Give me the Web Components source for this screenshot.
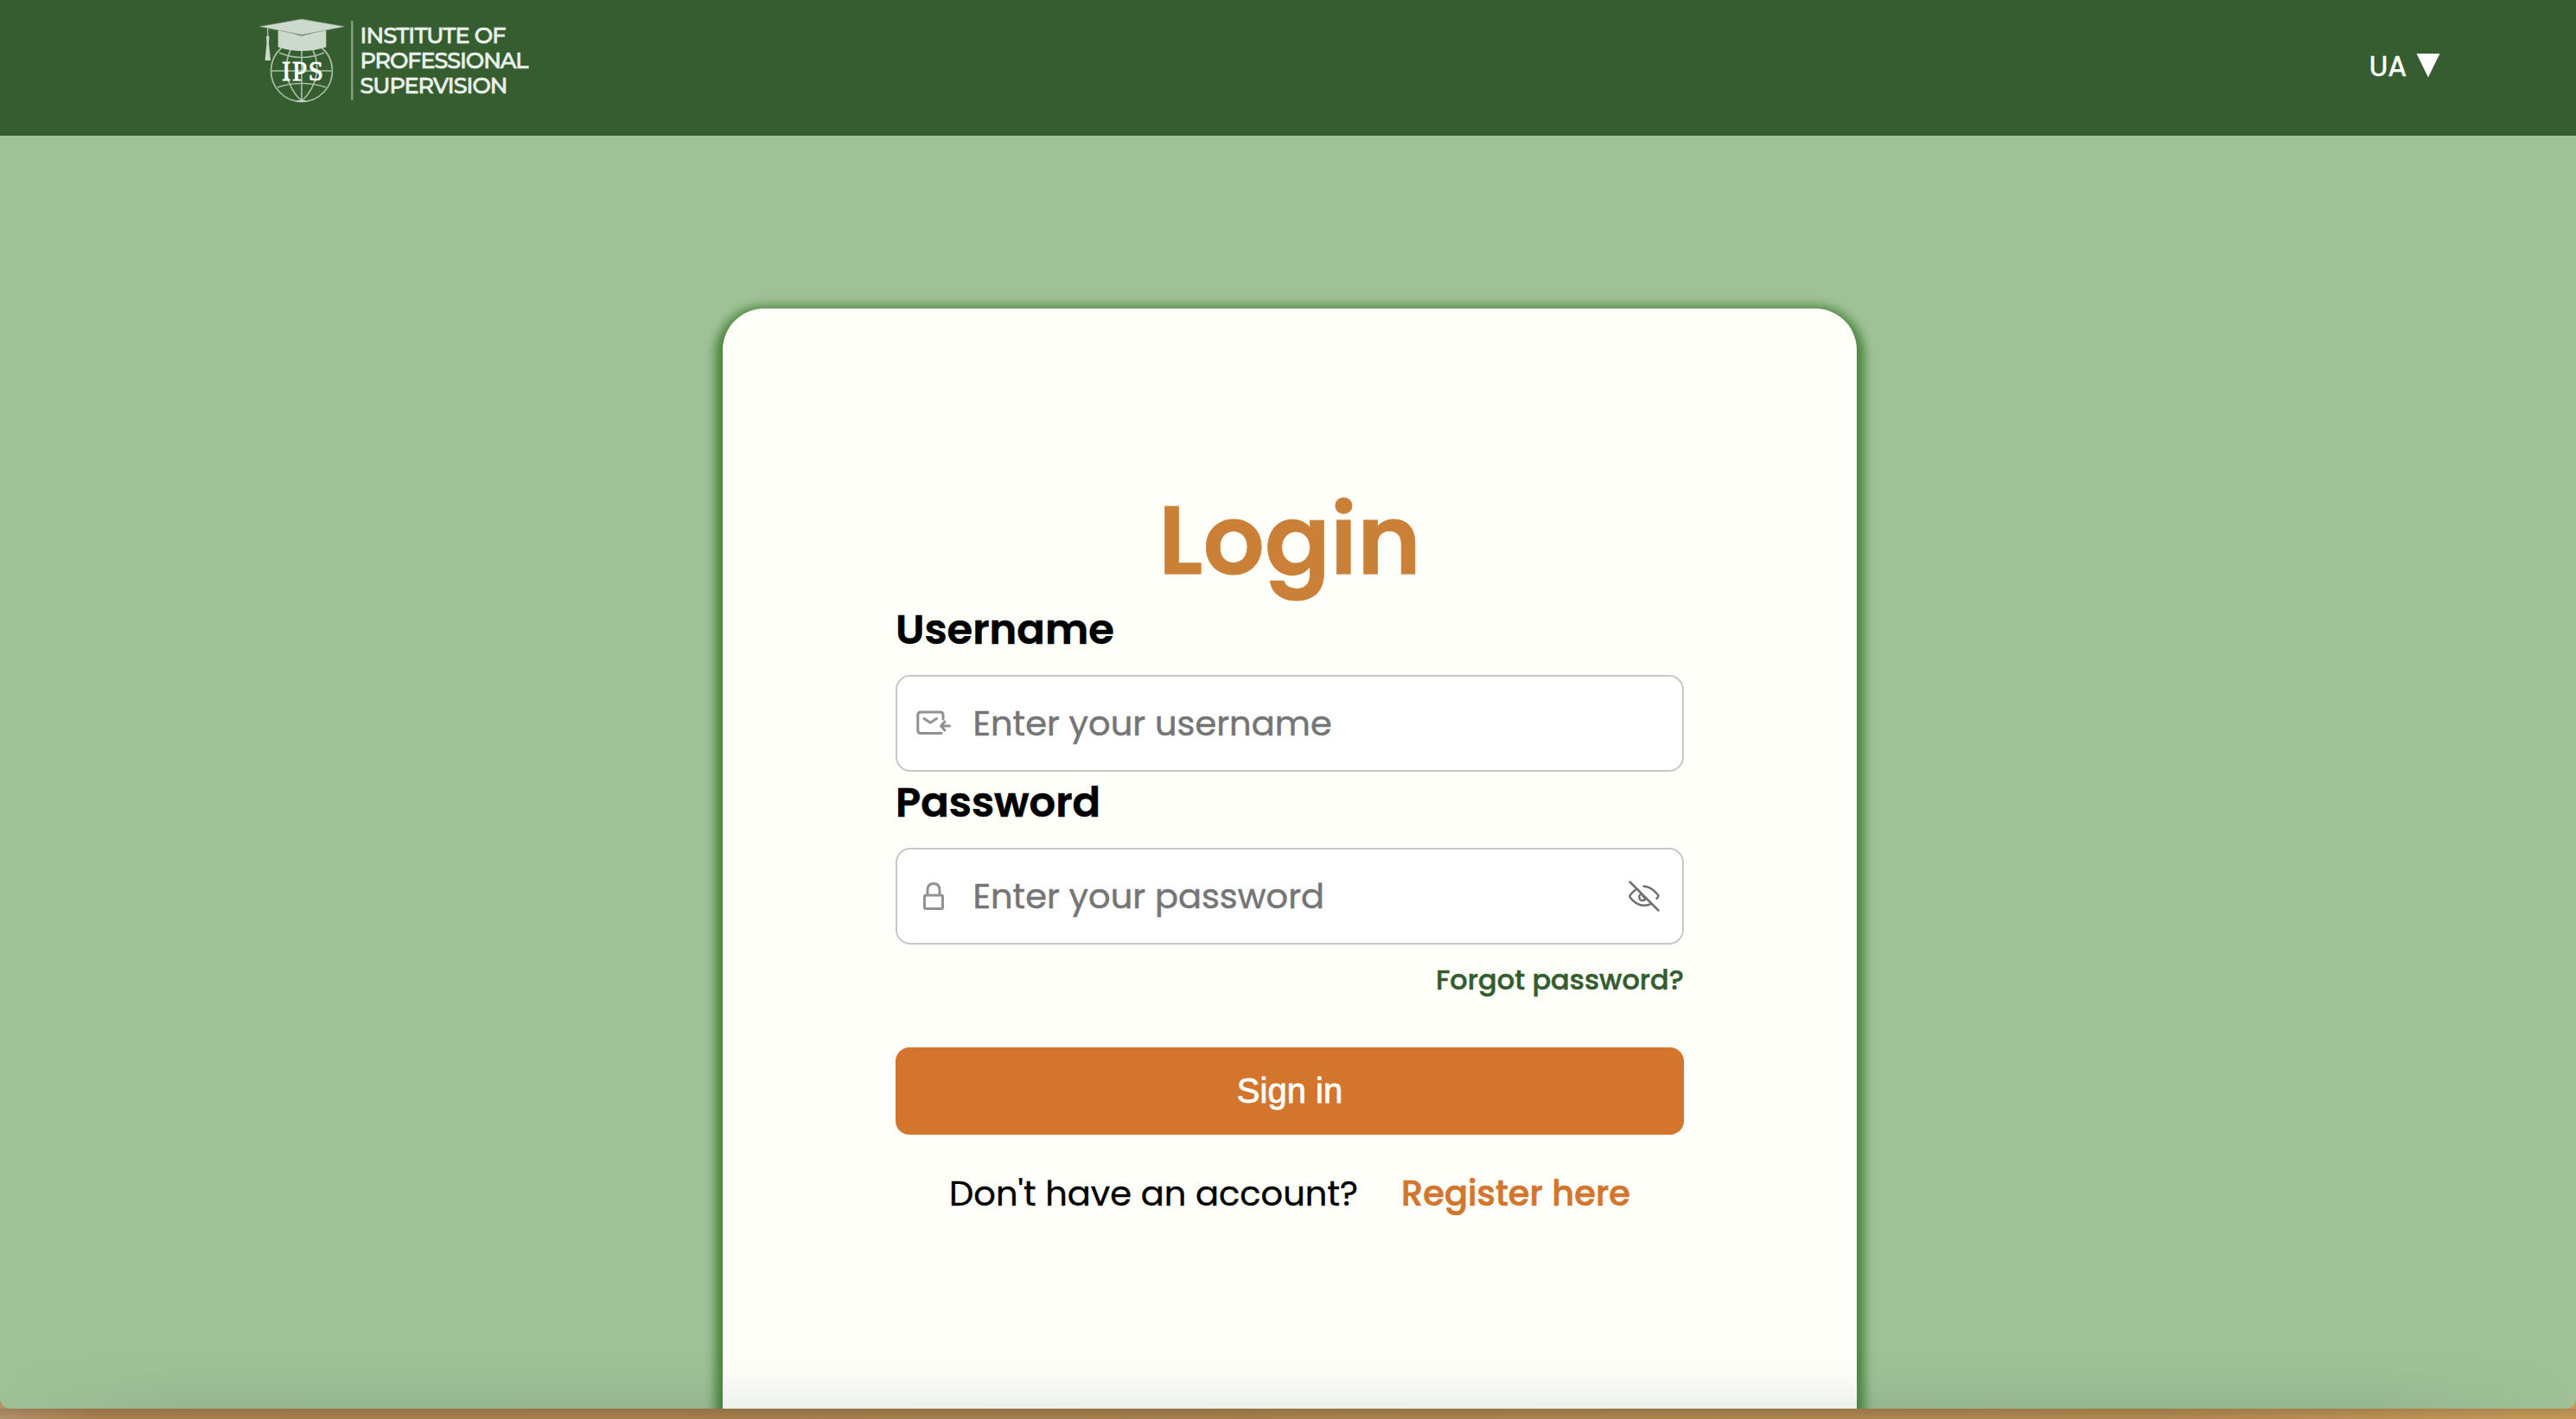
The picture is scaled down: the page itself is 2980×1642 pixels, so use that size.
<!DOCTYPE html>
<html lang="en">
<head>
<meta charset="utf-8">
<title>Login</title>
<style>
html,body{margin:0;height:100%;overflow:hidden;background:#a8804e}
body{font-family:Poppins,Inter,"Noto Sans",sans-serif}
</style>
</head>
<body>
<ips-page>
  <ips-header slot="header"></ips-header>
  <login-card></login-card>
</ips-page>
<script>
const define = (name, html) => {
  const t = document.createElement('template');
  t.innerHTML = html;
  customElements.define(name, class extends HTMLElement {
    constructor() {
      super();
      this.attachShadow({mode: 'open'}).append(t.content.cloneNode(true));
    }
  });
};

define('ips-logo', `<style>:host{display:block}svg{display:block}</style>
<svg width="320" height="100" viewBox="0 0 320 100" fill="none">
  <g stroke="#a7bda5" stroke-width="1.7">
    <path d="M26 35A35.5 35.5 0 1 0 72 35"/>
    <path d="M49 38V97M13.5 62H84.5"/>
    <path d="M36 38C28 54 29 78 49 97M62 38C70 54 69 78 49 97"/>
    <path d="M23 41Q49 52 75 41M21 81Q49 72 77 81"/>
  </g>
  <path d="M42 97.5Q49 94 56 97.5Z" fill="#d7e0d6"/>
  <path d="M21.7 14V34.5Q49 43.5 77.3 34.5V14L49 21.5Z" fill="#ced9cd"/>
  <path d="M0 10.7L49 2L99 10.7L49 20.5Z" fill="#ced9cd" stroke="#6d8b69" stroke-width=".6"/>
  <path d="M9.7 12.5V34" stroke="#a7bda5" stroke-width="1.5"/>
  <path d="M8 22H11.5L11 30L13 50H6.5L8.5 30Z" fill="#ced9cd"/>
  <path d="M107.3 4V96" stroke="#819a7e" stroke-width="2.6"/>
  <text x="26" y="72.5" textLength="48" font-family="Liberation Serif,serif" font-size="31" fill="#fff" stroke="#fff" stroke-width=".8">IPS</text>
  <g font-family="Montserrat,Inter,sans-serif" font-weight="500" font-size="25.500" fill="#eaf0ea" stroke="#eaf0ea" stroke-width=".7">
    <text x="116.500" y="30.300" textLength="169">INSTITUTE OF</text>
    <text x="116.500" y="59.300" textLength="195">PROFESSIONAL</text>
    <text x="116.500" y="88.300" textLength="171">SUPERVISION</text>
  </g>
</svg>`);

define('lang-switch', `<style>
:host{display:flex;align-items:center;gap:11px;color:#fff;font-size:32px;line-height:40px;-webkit-text-stroke:.6px #fff}
svg{display:block;margin-bottom:2px}
</style><span>UA</span>
<svg width="28" height="28" viewBox="0 0 28 28"><path d="M.5 0H27.5L14 27.5Z" fill="#fff"/></svg>`);

define('ips-header', `<style>
:host{display:flex;justify-content:space-between;align-items:flex-start;box-sizing:border-box;height:157px;padding:20px 157px 0 300px;background:#355d30}
lang-switch{margin-top:37px}
</style><ips-logo></ips-logo><lang-switch></lang-switch>`);

define('ips-page', `<style>
:host{display:block;height:1642px;background:linear-gradient(90deg,#b39068 0,#a8804e 110px,#a57e4d 1200px,#b0874f 2500px,#c59a58 2980px)}
.window{display:flex;flex-direction:column;position:relative;height:1630px;overflow:hidden;background:#a0c197;border-radius:0 0 12px 12px}
main{display:flex;flex:1;justify-content:center;align-items:flex-start;padding:200px 0 0 4px;min-height:0}
.shade{position:absolute;inset:auto 0 0 0;height:70px;background:linear-gradient(#28465000,#28465004 40%,#2846500a 65%,#28465016 100%);
 -webkit-mask-image:linear-gradient(90deg,transparent,#000 220px,#000 2740px,transparent)}
.edge{height:12px;background:linear-gradient(#0000001c,#0000)}
</style>
<div class="window"><slot name="header"></slot><main><slot></slot></main><div class="shade"></div></div>
<div class="edge"></div>`);

define('icon-mail', `<style>:host,svg{display:block}</style>
<svg width="42" height="32" viewBox="0 0 42 32" fill="none" stroke="#929292" stroke-width="3" stroke-linecap="round" stroke-linejoin="round">
<path d="M31 11V6.500Q31 3 27.500 3H5Q1.800 3 1.800 6.500V24Q1.800 27.500 5 27.500H29M9 10.500L16.200 15.300L23.500 10.500"/>
<path d="M38.500 19H29.500M33 14L28.500 19L33 24"/></svg>`);

define('icon-lock', `<style>:host,svg{display:block}</style>
<svg width="42" height="34" viewBox="0 0 42 34" fill="none" stroke="#929292" stroke-width="3" stroke-linejoin="round">
<rect x="9.500" y="16" width="21" height="15.500" rx="1.500"/><path d="M13 16V10Q13 2.500 20 2.500T27 10V16"/></svg>`);

define('icon-eye-off', `<style>:host,svg{display:block}</style>
<svg width="38" height="38" viewBox="0 0 38 38" fill="none" stroke="#707070" stroke-width="2.500" stroke-linecap="round" stroke-linejoin="round">
<path d="M2.500 2.500L35.500 35.500M10 11Q6 13.500 2.700 18Q1.800 19 2.700 20.300Q9.500 29.500 18 29.800Q23.500 30 27.500 27.500"/>
<path d="M18.500 7.500Q27 7.800 35 17.500Q36 19 35 20L33.500 21.800"/>
<path d="M15.500 16.500A4 4 0 1 0 21 21.500"/><path d="M17.500 18.500L19 20.500"/></svg>`);

define('form-field', `<style>
:host{display:block}
.label{padding-top:1px;font-size:48px;line-height:70px;font-weight:600;color:#000;-webkit-text-stroke:.6px #000}
.box{display:flex;align-items:center;box-sizing:border-box;height:112px;margin-top:17px;padding:0 25px 0 22px;border:2px solid #c8c8c8;border-radius:17px;background:#fff}
.hint{flex:1;margin-left:23.5px;font-size:40px;line-height:60px;color:#757575;-webkit-text-stroke:.5px #757575}
</style>
<div class="label"><slot name="label"></slot></div>
<div class="box"><slot name="icon"></slot><div class="hint"><slot></slot></div><slot name="action"></slot></div>`);

define('login-card', `<style>
:host{display:flex;flex-direction:column;box-sizing:border-box;flex:none;width:1312px;height:1400px;padding:203px 200px 0;border-radius:48px;background:#fffffa;box-shadow:0 6px 12px 9px #4b863e}
h1{margin:0 0 3px;text-align:center;font-size:112px;line-height:130px;font-weight:600;color:#cb8037;-webkit-text-stroke:.8px #cb8037}
.forgot{align-self:flex-end;margin:21px 0 58px;font-size:32px;line-height:40px;font-weight:500;color:#335c2f;-webkit-text-stroke:.5px #335c2f}
button{display:block;flex:none;height:101px;border:0;padding:0 0 2px;border-radius:16px;background:#d4752d;color:#fff;font:40px/1 "Liberation Sans",sans-serif;-webkit-text-stroke:.8px #fff}
.foot{display:flex;justify-content:center;gap:50px;margin-top:38px;font-size:40px;line-height:60px;color:#000}
.ask{-webkit-text-stroke:.4px #000}
.reg{font-weight:500;color:#d4752d;-webkit-text-stroke:.7px #d4752d}
</style>
<h1>Login</h1>
<form-field><span slot="label">Username</span><icon-mail slot="icon"></icon-mail>Enter your username</form-field>
<form-field><span slot="label">Password</span><icon-lock slot="icon"></icon-lock>Enter your password<icon-eye-off slot="action"></icon-eye-off></form-field>
<span class="forgot">Forgot password?</span>
<button>Sign in</button>
<div class="foot"><span class="ask">Don't have an account?</span><span class="reg">Register here</span></div>`);
</script>
</body>
</html>
